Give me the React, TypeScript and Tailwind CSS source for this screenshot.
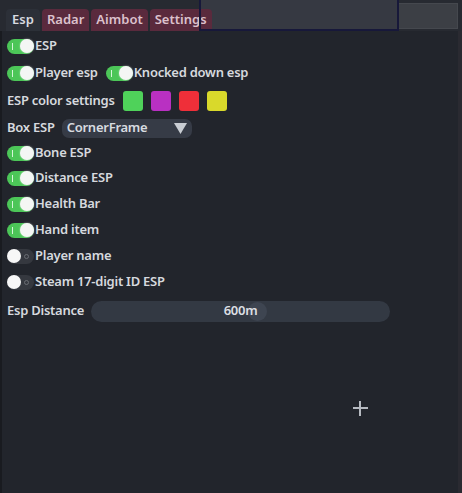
import React from 'react';

function Toggle({ on }: { on: boolean }) {
  if (on) {
    return (
      <div className="relative flex h-[15px] w-[27px] shrink-0 items-center justify-end rounded-full bg-[#4cc658]">
        <span className="absolute left-[5px] top-[4px] h-[7px] w-[1px] bg-[#d6f5d9]" />
        <span className="h-[14px] w-[14px] rounded-full bg-[#f4f6f4] shadow-[0_0_2px_rgba(255,255,255,0.6)]" />
      </div>
    );
  }
  return (
    <div className="relative flex h-[15px] w-[27px] shrink-0 items-center justify-start rounded-full bg-[#35383f]">
      <span className="absolute right-[5px] top-[5px] h-[5px] w-[5px] rounded-full border border-[#6a6d73]" />
      <span className="h-[14px] w-[14px] rounded-full bg-[#f7f7f7]" />
    </div>
  );
}

function Row({ h, children }: { h: string; children: React.ReactNode }) {
  return <div className={`flex items-center ${h}`}>{children}</div>;
}

export default function App() {
  const tabs = ['Radar', 'Aimbot', 'Settings'];
  const swatches = ['#4fd25a', '#b930c2', '#ef2f39', '#d9d92b'];
  const checks: { label: string; on: boolean }[] = [
    { label: 'Bone ESP', on: true },
    { label: 'Distance ESP', on: true },
    { label: 'Health Bar', on: true },
    { label: 'Hand item', on: true },
    { label: 'Player name', on: false },
    { label: 'Steam 17-digit ID ESP', on: false },
  ];

  return (
    <div
      className="relative h-[493px] w-[462px] overflow-hidden bg-[#22252c] text-[13px] font-semibold tracking-[-0.25px] text-[#d6d9de]"
      style={{ fontFamily: '"Noto Sans", "DejaVu Sans", sans-serif' }}
    >
      {/* window edges */}
      <div className="absolute inset-y-0 left-0 w-[2px] bg-[#191b20]" />
      <div className="absolute inset-y-0 right-0 w-[4px] bg-[#2a2a31]" />

      {/* tab bar */}
      <div className="relative h-[31px] bg-[#272a31]">
        <div className="absolute left-[200px] top-0 h-[30px] w-[198px] bg-[#363942]" />
        <div className="absolute left-[398px] top-[3px] h-[26px] w-[60px] border border-[#45484e] bg-[#3c3f45]" />
        <div className="relative z-10 flex h-full items-end gap-[2px] pl-[6px] tracking-normal">
          <div className="flex h-[22px] w-[34px] items-center justify-center rounded-t-[4px] bg-[#2c3038] text-[#d8dbe0]">
            Esp
          </div>
          {tabs.map((t) => (
            <div
              key={t}
              className="flex h-[22px] items-center rounded-t-[4px] bg-[#5a2a3d] px-[5px] text-[#dcc1cc]"
            >
              {t}
            </div>
          ))}
        </div>
        <div className="pointer-events-none absolute left-[199px] top-[-2px] z-20 h-[33px] w-[200px] border-2 border-[#17183a]" />
      </div>

      {/* content */}
      <div className="flex flex-col pl-[7px] pt-[2px]">
        <Row h="h-[26px]">
          <Toggle on />
          <span className="ml-[1px]">ESP</span>
        </Row>
        <Row h="h-[28px]">
          <Toggle on />
          <span className="ml-[1px]">Player esp</span>
          <div className="ml-[8px]">
            <Toggle on />
          </div>
          <span className="ml-[1px]">Knocked down esp</span>
        </Row>
        <Row h="h-[28px]">
          <span>ESP color settings</span>
          <div className="ml-[8px] flex gap-[8px]">
            {swatches.map((c) => (
              <span key={c} className="h-[20px] w-[20px] rounded-[3px]" style={{ backgroundColor: c }} />
            ))}
          </div>
        </Row>
        <Row h="h-[26px]">
          <span>Box ESP</span>
          <div className="ml-[7px] flex h-[19px] w-[130px] items-center justify-between rounded-[7px] bg-[#363b46] pl-[5px] pr-[5px]">
            <span className="text-[#d8dbe0]">CornerFrame</span>
            <svg width="13" height="11" viewBox="0 0 13 11">
              <polygon points="0,0 13,0 6.5,11" fill="#c9cdd3" />
            </svg>
          </div>
        </Row>
        <Row h="h-[24px]">
          <Toggle on />
          <span className="ml-[1px]">{checks[0].label}</span>
        </Row>
        {checks.slice(1).map((c) => (
          <Row key={c.label} h="h-[26px]">
            <Toggle on={c.on} />
            <span className="ml-[1px]">{c.label}</span>
          </Row>
        ))}
        <Row h="h-[32px]">
          <span>Esp Distance</span>
          <div className="relative ml-[7px] flex h-[21px] w-[299px] items-center justify-center rounded-full bg-[#333943]">
            <span className="absolute left-[157px] top-[1px] h-[19px] w-[19px] rounded-full bg-[#3e4551]" />
            <span className="relative text-[#dcdfe3]">600m</span>
          </div>
        </Row>
      </div>

      {/* cursor */}
      <div className="absolute left-[353px] top-[401px] h-[15px] w-[15px]">
        <span className="absolute left-0 top-[6px] h-[2px] w-[15px] bg-[#b6bac1]" />
        <span className="absolute left-[6px] top-0 h-[15px] w-[2px] bg-[#b6bac1]" />
      </div>
    </div>
  );
}
